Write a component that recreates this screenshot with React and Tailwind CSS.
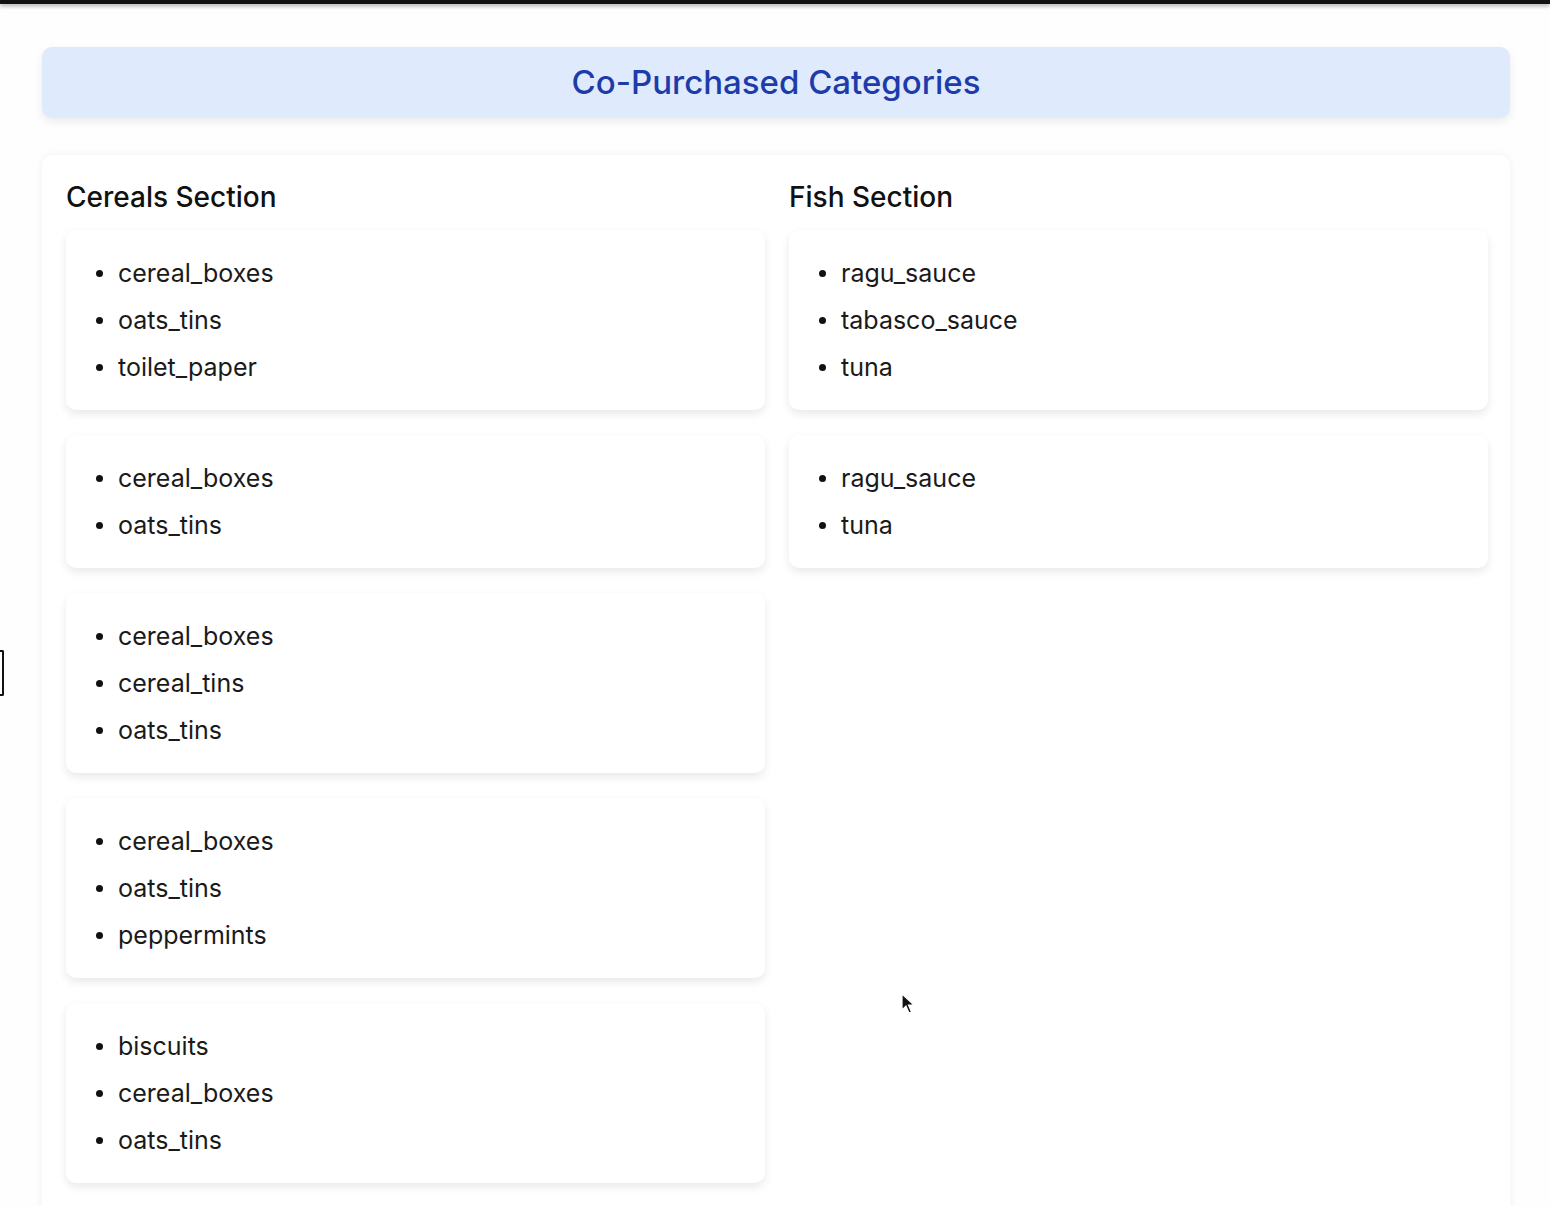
import React from 'react';

const cereals = [
  ['cereal_boxes', 'oats_tins', 'toilet_paper'],
  ['cereal_boxes', 'oats_tins'],
  ['cereal_boxes', 'cereal_tins', 'oats_tins'],
  ['cereal_boxes', 'oats_tins', 'peppermints'],
  ['biscuits', 'cereal_boxes', 'oats_tins'],
];

const fish = [
  ['ragu_sauce', 'tabasco_sauce', 'tuna'],
  ['ragu_sauce', 'tuna'],
];

const GroupCard = ({ items }) => (
  <div className="rounded-[10px] bg-white pl-[30px] pr-[31px] py-[19.5px] shadow-[0_4px_10px_rgba(0,0,0,0.09)]">
    <ul>
      {items.map((item, i) => (
        <li key={i} className="flex items-center leading-[47px] text-[25px] text-[#1a1a1a]">
          <span className="mr-[15px] h-[7px] w-[7px] rounded-full bg-[#111]"></span>
          {item}
        </li>
      ))}
    </ul>
  </div>
);

const Section = ({ title, groups }) => (
  <div>
    <h2 className="mb-[16px] text-[28px] leading-[34px] font-medium text-[#111]">{title}</h2>
    <div className="flex flex-col gap-[25px]">
      {groups.map((g, i) => (
        <GroupCard key={i} items={g} />
      ))}
    </div>
  </div>
);

export default function App() {
  return (
    <div
      className="relative min-h-screen overflow-hidden bg-[#fefefe]"
      style={{ fontFamily: 'Inter, "Noto Sans", sans-serif' }}
    >
      {/* top bar from the capture */}
      <div className="h-[4px] bg-[#111] shadow-[0_2px_4px_rgba(0,0,0,0.35)]"></div>

      <div className="pl-[42px] pr-[40px] pt-[43px]">
        <div className="flex h-[71px] items-center justify-center rounded-[10px] bg-[#dfeafc] shadow-[0_4px_8px_rgba(0,0,0,0.08)]">
          <h1 className="text-[33px] font-medium text-[#1d3caa]">Co-Purchased Categories</h1>
        </div>

        <div className="mt-[37px] rounded-[10px] bg-white px-[22px] pl-[24px] pt-[25px] pb-[40px] shadow-[0_0_8px_rgba(0,0,0,0.06)]">
          <div className="grid grid-cols-2 items-start gap-[24px]">
            <Section title="Cereals Section" groups={cereals} />
            <Section title="Fish Section" groups={fish} />
          </div>
        </div>
      </div>

      {/* left edge marker */}
      <div className="absolute left-0 top-[650px] h-[46px] w-[4px] rounded-r-[2px] border-y-2 border-r-2 border-[#111]"></div>

      {/* mouse pointer */}
      <svg className="absolute left-[901px] top-[993px]" width="16" height="22" viewBox="0 0 16 22">
        <path d="M1 1 L1 17 L5 13 L8 20 L10.5 19 L7.5 12 L13 12 Z" fill="#111" stroke="#fff" strokeWidth="1.2" />
      </svg>
    </div>
  );
}
